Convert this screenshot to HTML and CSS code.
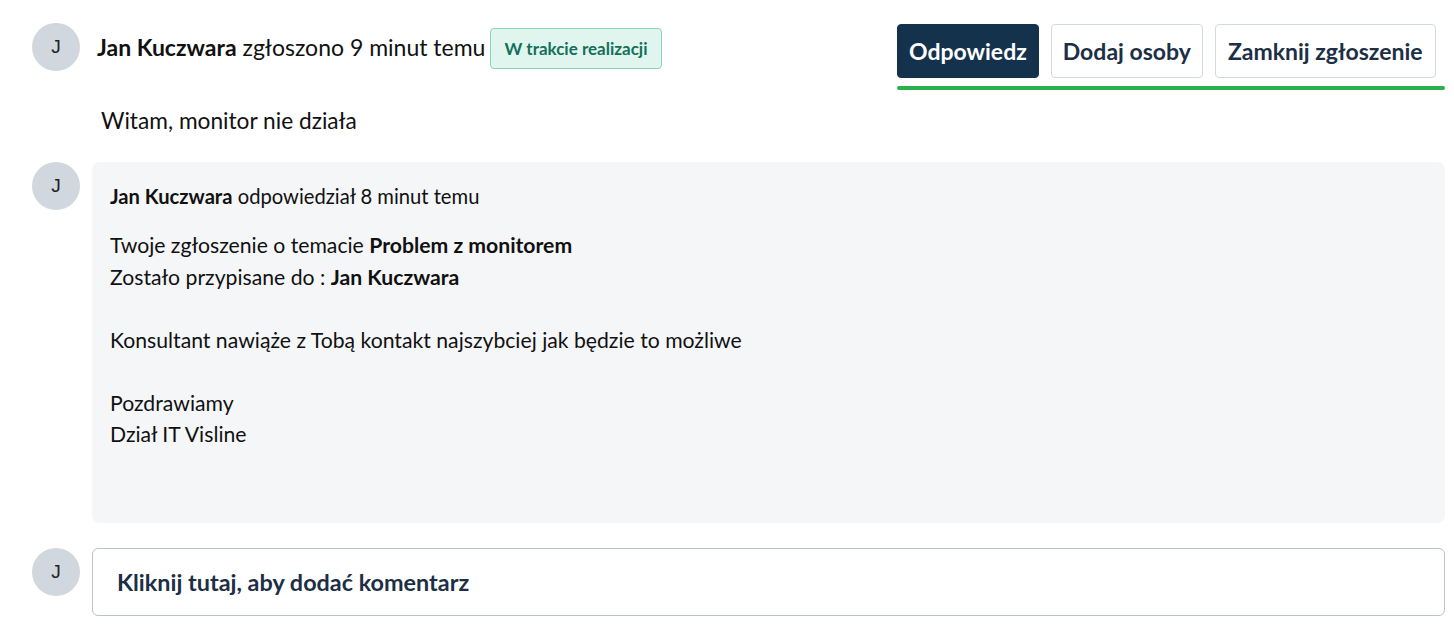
FILE: index.html
```html
<!DOCTYPE html>
<html lang="pl">
<head>
<meta charset="utf-8">
<title>Zgłoszenie</title>
<link rel="stylesheet" href="styles.css">
</head>
<body>
<div class="page">
  <div class="header">
    <div class="head-left">
      <div class="avatar">J</div>
      <div class="title"><b>Jan Kuczwara</b> zgłoszono 9 minut temu</div>
      <span class="badge">W trakcie realizacji</span>
    </div>
    <div class="actions">
      <div class="buttons">
        <button class="btn btn-primary">Odpowiedz</button>
        <button class="btn">Dodaj osoby</button>
        <button class="btn btn-wide">Zamknij zgłoszenie</button>
      </div>
      <div class="underline"></div>
    </div>
  </div>
  <div class="message">Witam, monitor nie działa</div>

  <div class="row">
    <div class="avatar">J</div>
    <div class="card">
      <div class="card-meta"><b>Jan Kuczwara</b> odpowiedział 8 minut temu</div>
      <div class="card-body">
        <p>Twoje zgłoszenie o temacie <b>Problem z monitorem</b><br>Zostało przypisane do : <b>Jan Kuczwara</b></p>
        <p>Konsultant nawiąże z Tobą kontakt najszybciej jak będzie to możliwe</p>
        <p>Pozdrawiamy<br>Dział IT Visline</p>
      </div>
    </div>
  </div>

  <div class="row row-comment">
    <div class="avatar">J</div>
    <div class="comment">Kliknij tutaj, aby dodać komentarz</div>
  </div>
</div>
</body>
</html>
```
FILE: styles.css
```css
* { box-sizing: border-box; }
body {
  margin: 0;
  background: #ffffff;
  font-family: Lato, "Noto Sans", sans-serif;
  color: #111;
}
.page {
  padding: 23px 9px 0 32px;
}
.header {
  display: flex;
  justify-content: space-between;
  align-items: flex-start;
}
.head-left {
  display: flex;
  align-items: center;
  height: 48px;
}
.avatar {
  width: 48px;
  height: 48px;
  flex: 0 0 48px;
  border-radius: 50%;
  background: #d0d7df;
  color: #222;
  font-family: "Liberation Sans", Arial, sans-serif;
  font-size: 19px;
  display: flex;
  align-items: center;
  justify-content: center;
}
.title {
  margin-left: 17px;
  font-size: 23px;
  color: #111;
}
.title b { font-weight: 700; }
.badge {
  margin-left: 5px;
  margin-top: 2px;
  height: 41px;
  padding: 0 13px;
  display: inline-flex;
  align-items: center;
  background: #e1f5ef;
  border: 1px solid #8ed2be;
  border-radius: 4px;
  color: #12705a;
  font-size: 17px;
  font-weight: 700;
}
.actions {
  margin-top: 1px;
  width: 548px;
  display: flex;
  flex-direction: column;
}
.buttons {
  display: flex;
  gap: 12px;
}
.btn {
  height: 54px;
  padding: 0 11px;
  background: #fff;
  border: 1px solid #d3d9e0;
  border-radius: 4px;
  font-family: inherit;
  font-size: 23px;
  font-weight: 700;
  color: #1c2f45;
}
.btn-wide {
  padding: 0 12px;
}
.btn-primary {
  background: #15324c;
  border-color: #15324c;
  color: #fff;
}
.underline {
  margin-top: 8px;
  height: 4px;
  border-radius: 2px;
  background: #2bb04b;
}
.message {
  margin: 17px 0 0 69px;
  font-size: 22.7px;
  line-height: 28px;
  color: #111;
}
.row {
  display: flex;
  gap: 12px;
  margin-top: 27px;
}
.card {
  flex: 1;
  background: #f5f6f8;
  border-radius: 8px;
  padding: 22px 18px 72px;
}
.card-meta {
  font-size: 20.2px;
  line-height: 24px;
}
.card-body {
  margin-top: 22px;
  font-size: 21.2px;
  line-height: 31.5px;
}
.card-body p {
  margin: 0 0 31.5px;
}
.card-body p:last-child { margin-bottom: 0; }
.row-comment {
  margin-top: 25px;
}
.comment {
  flex: 1;
  height: 68px;
  border: 1px solid #b9c3cd;
  border-radius: 6px;
  padding: 0 24px;
  display: flex;
  align-items: center;
  font-size: 23.4px;
  font-weight: 700;
  color: #1c2f45;
}
```
